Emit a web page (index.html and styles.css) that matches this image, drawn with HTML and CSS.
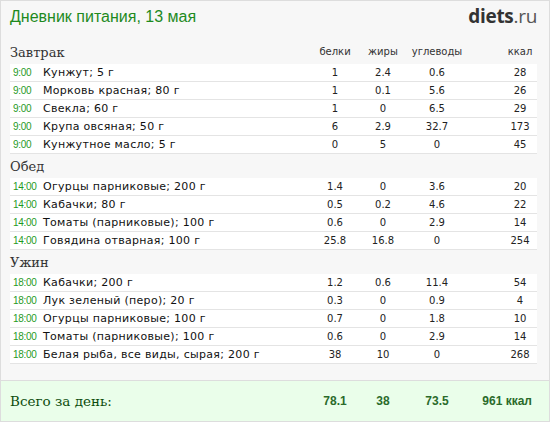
FILE: index.html
```html
<!DOCTYPE html>
<html lang="ru">
<head>
<meta charset="utf-8">
<link rel="stylesheet" href="styles.css">
</head>
<body>
<div class="page">
  <div class="top">
    <div class="title">Дневник питания, 13 мая</div>
    <div class="logo"><b>diets</b>.ru</div>
  </div>

  <div class="section">
    <div class="head">
      <div class="meal">Завтрак</div>
      <div class="lbl c3">белки</div>
      <div class="lbl c4">жиры</div>
      <div class="lbl c5">углеводы</div>
      <div class="lbl c7">ккал</div>
    </div>
    <div class="row"><span class="time">9:00</span><span class="name">Кунжут; 5 г</span><span class="n c3">1</span><span class="n c4">2.4</span><span class="n c5">0.6</span><span class="n c7">28</span></div>
    <div class="row"><span class="time">9:00</span><span class="name">Морковь красная; 80 г</span><span class="n c3">1</span><span class="n c4">0.1</span><span class="n c5">5.6</span><span class="n c7">26</span></div>
    <div class="row"><span class="time">9:00</span><span class="name">Свекла; 60 г</span><span class="n c3">1</span><span class="n c4">0</span><span class="n c5">6.5</span><span class="n c7">29</span></div>
    <div class="row"><span class="time">9:00</span><span class="name">Крупа овсяная; 50 г</span><span class="n c3">6</span><span class="n c4">2.9</span><span class="n c5">32.7</span><span class="n c7">173</span></div>
    <div class="row"><span class="time">9:00</span><span class="name">Кунжутное масло; 5 г</span><span class="n c3">0</span><span class="n c4">5</span><span class="n c5">0</span><span class="n c7">45</span></div>
  </div>

  <div class="section">
    <div class="head"><div class="meal">Обед</div></div>
    <div class="row"><span class="time">14:00</span><span class="name">Огурцы парниковые; 200 г</span><span class="n c3">1.4</span><span class="n c4">0</span><span class="n c5">3.6</span><span class="n c7">20</span></div>
    <div class="row"><span class="time">14:00</span><span class="name">Кабачки; 80 г</span><span class="n c3">0.5</span><span class="n c4">0.2</span><span class="n c5">4.6</span><span class="n c7">22</span></div>
    <div class="row"><span class="time">14:00</span><span class="name">Томаты (парниковые); 100 г</span><span class="n c3">0.6</span><span class="n c4">0</span><span class="n c5">2.9</span><span class="n c7">14</span></div>
    <div class="row"><span class="time">14:00</span><span class="name">Говядина отварная; 100 г</span><span class="n c3">25.8</span><span class="n c4">16.8</span><span class="n c5">0</span><span class="n c7">254</span></div>
  </div>

  <div class="section">
    <div class="head"><div class="meal">Ужин</div></div>
    <div class="row"><span class="time">18:00</span><span class="name">Кабачки; 200 г</span><span class="n c3">1.2</span><span class="n c4">0.6</span><span class="n c5">11.4</span><span class="n c7">54</span></div>
    <div class="row"><span class="time">18:00</span><span class="name">Лук зеленый (перо); 20 г</span><span class="n c3">0.3</span><span class="n c4">0</span><span class="n c5">0.9</span><span class="n c7">4</span></div>
    <div class="row"><span class="time">18:00</span><span class="name">Огурцы парниковые; 100 г</span><span class="n c3">0.7</span><span class="n c4">0</span><span class="n c5">1.8</span><span class="n c7">10</span></div>
    <div class="row"><span class="time">18:00</span><span class="name">Томаты (парниковые); 100 г</span><span class="n c3">0.6</span><span class="n c4">0</span><span class="n c5">2.9</span><span class="n c7">14</span></div>
    <div class="row"><span class="time">18:00</span><span class="name">Белая рыба, все виды, сырая; 200 г</span><span class="n c3">38</span><span class="n c4">10</span><span class="n c5">0</span><span class="n c7">268</span></div>
  </div>

  <div class="total">
    <div class="total-label">Всего за день:</div>
    <div class="t c3">78.1</div>
    <div class="t c4">38</div>
    <div class="t c5">73.5</div>
    <div class="t kc">961 ккал</div>
  </div>
</div>
</body>
</html>
```

FILE: styles.css
```css
html, body {
  margin: 0;
  padding: 0;
  background: #ffffff;
}

.page {
  width: 550px;
  height: 422px;
  box-sizing: border-box;
  border: 1px solid #dddddd;
  background: #f7f7f7;
  display: flex;
  flex-direction: column;
  font-family: "DejaVu Sans", Verdana, sans-serif;
  color: #111;
}

.top {
  height: 39px;
  display: flex;
  justify-content: space-between;
  align-items: flex-start;
  padding: 0 12px 0 9px;
}

.title {
  font-family: "Liberation Sans", Arial, sans-serif;
  font-size: 16px;
  line-height: 18px;
  color: #1e8a1e;
  margin-top: 7px;
}

.logo {
  font-family: "Open Sans", "Liberation Sans", sans-serif;
  font-size: 19px;
  line-height: 19px;
  color: #555;
  margin-top: 6px;
  letter-spacing: -0.3px;
}
.logo b {
  color: #333;
  font-weight: 700;
}

.section {
  margin-left: 9px;
  width: 527px;
}

.head,
.row,
.total {
  display: grid;
  grid-template-columns: 30px 268px 48px 48px 60px 36px 34px;
  padding-left: 3px;
}

.head {
  height: 24px;
  align-items: end;
}

.meal {
  grid-column: 1 / 3;
  margin-left: -3px;
  font-family: "DejaVu Serif", Georgia, serif;
  font-size: 13px;
  line-height: 18px;
  color: #333;
  padding-bottom: 2px;
}

.lbl {
  font-size: 10px;
  line-height: 14px;
  color: #333;
  text-align: center;
  padding-bottom: 5px;
}

.c3 { grid-column: 3; }
.c4 { grid-column: 4; }
.c5 { grid-column: 5; }
.c7 { grid-column: 7; }

.row {
  height: 17px;
  background: #ffffff;
  border-bottom: 1px solid #e4e4e4;
  align-items: center;
}

.time {
  font-family: "Liberation Sans", Arial, sans-serif;
  font-size: 10px;
  letter-spacing: -0.3px;
  color: #1f9a1f;
}

.name {
  font-size: 11px;
  line-height: 17px;
  letter-spacing: 0.3px;
  color: #111;
  white-space: nowrap;
}

.n {
  font-size: 10px;
  line-height: 17px;
  text-align: center;
  color: #222;
}

.total {
  margin-top: auto;
  height: 40px;
  border-top: 1px solid #dddddd;
  background: #eafeea;
  padding-left: 12px;
  grid-template-columns: 30px 268px 48px 48px 60px 70px;
  align-items: center;
}

.total-label {
  grid-column: 1 / 3;
  font-family: "DejaVu Serif", Georgia, serif;
  font-size: 13.5px;
  color: #0d4d0d;
  margin-left: -3px;
}

.t {
  font-family: "Liberation Sans", Arial, sans-serif;
  font-weight: bold;
  font-size: 12px;
  color: #2b6b2b;
  text-align: center;
}

.kc {
  grid-column: 6;
  text-align: right;
  padding-right: 5px;
}
```
